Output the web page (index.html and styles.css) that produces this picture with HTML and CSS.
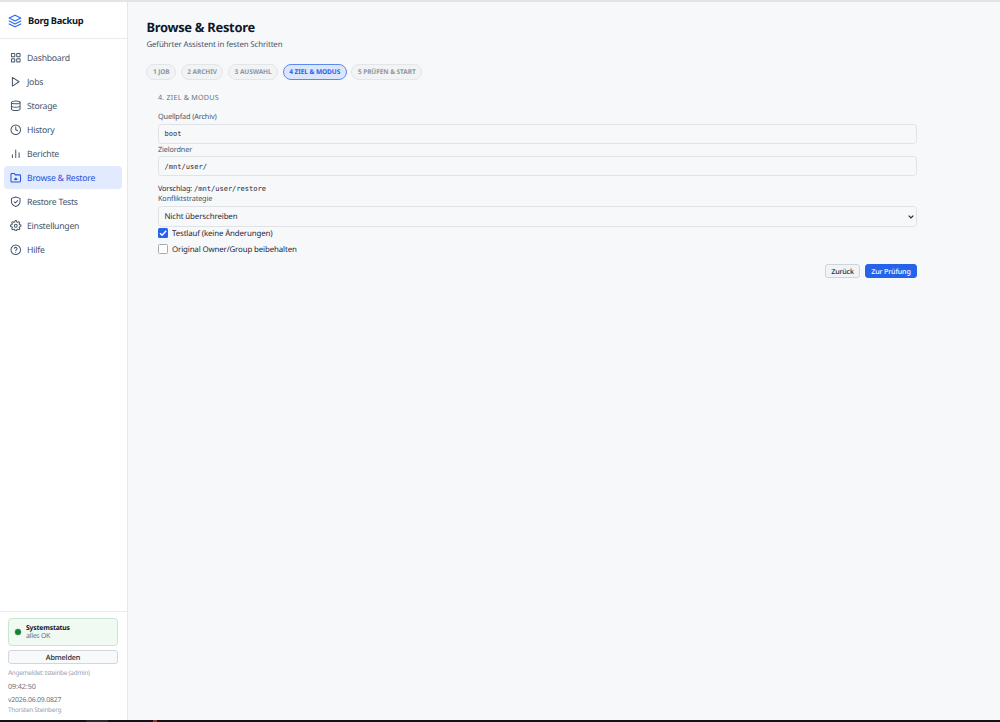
FILE: index.html
```html
<!DOCTYPE html>
<html lang="de">
<head>
<meta charset="utf-8">
<title>Borg Backup</title>
<link rel="stylesheet" href="styles.css">
</head>
<body>
<div class="app">
  <aside class="sidebar">
    <div class="brand">
      <svg class="brand-icon" viewBox="0 0 24 24"><path d="M12 2 2 7l10 5 10-5zM2 12l10 5 10-5M2 17l10 5 10-5"/></svg>
      <span>Borg Backup</span>
    </div>
    <nav class="nav">
      <a class="nav-item"><svg viewBox="0 0 24 24"><rect x="3" y="3" width="7" height="7" rx="1"/><rect x="14" y="3" width="7" height="7" rx="1"/><rect x="3" y="14" width="7" height="7" rx="1"/><rect x="14" y="14" width="7" height="7" rx="1"/></svg><span>Dashboard</span></a>
      <a class="nav-item"><svg viewBox="0 0 24 24"><path d="M5 3l14 9-14 9z"/></svg><span>Jobs</span></a>
      <a class="nav-item"><svg viewBox="0 0 24 24"><ellipse cx="12" cy="5" rx="9" ry="3"/><path d="M3 5v14c0 1.700 4 3 9 3s9-1.300 9-3V5M3 12c0 1.700 4 3 9 3s9-1.300 9-3"/></svg><span>Storage</span></a>
      <a class="nav-item"><svg viewBox="0 0 24 24"><circle cx="12" cy="12" r="10"/><path d="M12 6v6l4 2"/></svg><span>History</span></a>
      <a class="nav-item"><svg viewBox="0 0 24 24"><path d="M5 20v-6M12 20V4M19 20V10"/></svg><span>Berichte</span></a>
      <a class="nav-item active"><svg viewBox="0 0 24 24"><path d="M22 19a2 2 0 0 1-2 2H4a2 2 0 0 1-2-2V5a2 2 0 0 1 2-2h5l2 3h9a2 2 0 0 1 2 2z"/><path d="M12 12.500l-2.500 3h5zM12 13v3"/></svg><span>Browse &amp; Restore</span></a>
      <a class="nav-item"><svg viewBox="0 0 24 24"><path d="M12 22s9-4 9-10V5l-9-3-9 3v7c0 6 9 10 9 10z"/><path d="M8.500 12l2.500 2.500 5-5"/></svg><span>Restore Tests</span></a>
      <a class="nav-item"><svg viewBox="0 0 24 24"><circle cx="12" cy="12" r="3"/><path d="M19.400 15a1.650 1.650 0 0 0 .33 1.820l.06.06a2 2 0 1 1-2.830 2.830l-.06-.06a1.650 1.650 0 0 0-2.800 1.170V21a2 2 0 0 1-4 0v-.09A1.650 1.650 0 0 0 7.200 19.700l-.06.06a2 2 0 1 1-2.830-2.830l.06-.06A1.650 1.650 0 0 0 3.100 14H3a2 2 0 0 1 0-4h.09A1.650 1.650 0 0 0 4.300 7.200l-.06-.06a2 2 0 1 1 2.830-2.830l.06.06A1.650 1.650 0 0 0 10 3.100V3a2 2 0 0 1 4 0v.09a1.650 1.650 0 0 0 2.800 1.210l.06-.06a2 2 0 1 1 2.830 2.830l-.06.06A1.650 1.650 0 0 0 20.900 10H21a2 2 0 0 1 0 4h-.09a1.650 1.650 0 0 0-1.510 1z"/></svg><span>Einstellungen</span></a>
      <a class="nav-item"><svg viewBox="0 0 24 24"><circle cx="12" cy="12" r="10"/><path d="M9.100 9a3 3 0 0 1 5.800 1c0 2-2.900 2.500-2.900 4M12 17.500v.1"/></svg><span>Hilfe</span></a>
    </nav>
    <div class="side-foot">
      <div class="status"><i class="dot"></i><div><b class="status-title">Systemstatus</b><div class="status-text">alles OK</div></div></div>
      <button class="logout">Abmelden</button>
      <div class="user">Angemeldet: tsteinbe (admin)</div>
      <div class="clock">09:42:50</div>
      <div class="version">v2026.06.09.0827</div>
      <div class="author">Thorsten Steinberg</div>
    </div>
  </aside>
  <main class="main">
    <h1 class="title">Browse &amp; Restore</h1>
    <p class="subtitle">Geführter Assistent in festen Schritten</p>
    <div class="steps">
      <span class="step">1 JOB</span>
      <span class="step">2 ARCHIV</span>
      <span class="step">3 AUSWAHL</span>
      <span class="step current">4 ZIEL &amp; MODUS</span>
      <span class="step">5 PRÜFEN &amp; START</span>
    </div>
    <section class="panel">
      <h2 class="panel-title">4. ZIEL &amp; MODUS</h2>
      <label class="label">Quellpfad (Archiv)</label>
      <div class="field">boot</div>
      <label class="label label-next">Zielordner</label>
      <div class="field">/mnt/user/</div>
      <div class="hint">Vorschlag: <code>/mnt/user/restore</code></div>
      <label class="label label-select">Konfliktstrategie</label>
      <div class="field select"><span>Nicht überschreiben</span><svg viewBox="0 0 6 4"><path d="M.7.7 3 3 5.300.7"/></svg></div>
      <div class="check"><i class="box checked"><svg viewBox="0 0 10 10"><path d="M2 5.200 4.100 7.300 8.200 2.700"/></svg></i><span>Testlauf (keine Änderungen)</span></div>
      <div class="check check-next"><i class="box"></i><span>Original Owner/Group beibehalten</span></div>
      <div class="actions"><button class="btn">Zurück</button><button class="btn primary">Zur Prüfung</button></div>
    </section>
  </main>
</div>
<div class="taskbar"><i class="task"></i><i class="alert"></i></div>
</body>
</html>
```
FILE: styles.css
```css
* { box-sizing: border-box; }
body {
  margin: 0; height: 722px; overflow: hidden;
  display: flex; flex-direction: column;
  border-top: 2px solid #e4e4e6;
  background: #f7f8fa; color: #334155;
  font-family: "Noto Sans", sans-serif; font-size: 8px;
  text-rendering: geometricPrecision;
}
h1, h2, p { margin: 0; }
button { font-family: inherit; margin: 0; padding: 0; text-rendering: inherit; }
.app { flex: 1; min-height: 0; display: flex; }
.sidebar {
  width: 128px; flex: none; display: flex; flex-direction: column;
  background: #fff; border-right: 1px solid #e5e8ec;
}
.brand {
  height: 37px; flex: none; display: flex; align-items: center; gap: 6px;
  padding: 1px 0 0 8px; border-bottom: 1px solid #e8eaed;
  color: #0f172a; font-size: 9.300px; font-weight: 700; letter-spacing: -.3px; white-space: nowrap;
}
.brand-icon { width: 14px; height: 14px; fill: none; stroke: #2f6bed; stroke-width: 2; stroke-linejoin: round; stroke-linecap: round; }
.nav { flex: 1; padding: 7px 5px 0 3.500px; display: flex; flex-direction: column; gap: 1px; }
.nav-item {
  height: 23px; display: flex; align-items: center; gap: 5.500px; padding-left: 6.500px;
  border-radius: 4px; color: #475569; font-size: 8.700px; letter-spacing: -.25px; white-space: nowrap;
}
.nav-item svg { width: 11.500px; height: 11.500px; fill: none; stroke: currentColor; stroke-width: 2.100; stroke-linecap: round; stroke-linejoin: round; }
.nav-item.active { background: #e2eafd; color: #2454dd; }
.side-foot { flex: none; height: 109px; padding: 6px 9px 0 8px; border-top: 1px solid #e8eaed; white-space: nowrap; }
.status {
  height: 28px; display: flex; align-items: center; gap: 5px; padding-left: 6px;
  background: #f0f9f2; border: 1px solid #c5e8ce; border-radius: 3.500px; line-height: 8px;
}
.dot { width: 6px; height: 6px; border-radius: 50%; background: #15803d; box-shadow: 0 0 0 1px #d5ecdc; }
.status-title { display: block; color: #0f172a; font-size: 6.800px; letter-spacing: -.17px; }
.status-text { height: 8px; padding-top: 1px; color: #64748b; font-size: 6.900px; letter-spacing: -.25px; }
.logout {
  display: block; width: 100%; height: 14px; margin-top: 4px; padding-top: 1px; line-height: 12px;
  background: #f7f9fa; border: 1px solid #d3d6da; border-radius: 3px; color: #1e293b; font-size: 7.300px; font-weight: 500; letter-spacing: -.15px;
}
.user { margin-top: 4px; line-height: 10px; color: #94a3b8; font-size: 6.500px; letter-spacing: -.3px; }
.user { letter-spacing: -.32px; }
.clock { margin-top: 4px; line-height: 10px; color: #64748b; font-size: 7.200px; letter-spacing: -.1px; }
.version { margin-top: 4px; line-height: 10px; color: #64748b; font-size: 6.900px; letter-spacing: -.2px; }
.author { margin-top: -1px; line-height: 10px; color: #94a3b8; font-size: 6.400px; letter-spacing: -.25px; }
.main { flex: 1; padding: 17px 83px 0 18.400px; }
.title { line-height: 17px; color: #0f172a; font-size: 12.900px; font-weight: 700; letter-spacing: -.28px; }
.subtitle { margin-top: 4px; line-height: 10px; color: #475569; font-size: 7.900px; letter-spacing: -.14px; }
.steps { margin-top: 14px; display: flex; gap: 4.700px; }
.step {
  height: 16px; padding: 0 5.500px; line-height: 14px; border: 1px solid #e3e6e9; border-radius: 8px;
  background: #f1f3f5; color: #8e97a4; font-size: 6.500px; font-weight: 700; letter-spacing: -.06px; white-space: nowrap;
}
.step.current { background: #dbe6fb; border-color: #5b8bf0; color: #2563eb; }
.panel { padding: 12px 0 0 11.600px; }
.panel-title { padding-top: 1px; line-height: 11px; color: #64748b; font-size: 7.200px; font-weight: 400; letter-spacing: .2px; }
.label { display: block; margin-top: 8px; line-height: 10px; color: #475569; font-size: 7.300px; letter-spacing: -.14px; }
.field {
  height: 20px; margin-top: 2px; padding: 0 5.500px; line-height: 18px;
  border: 1px solid #dfe3e7; border-radius: 3.500px; color: #1e293b;
  font-family: "DejaVu Sans Mono", monospace; font-size: 7.050px;
}
.label-next { margin-top: 1px; }
.label-next + .field { margin-top: 1px; height: 20px; line-height: 19px; }
.hint { margin-top: 8px; line-height: 10px; color: #1e293b; font-size: 7.300px; letter-spacing: -.14px; }
.hint code { font-family: "DejaVu Sans Mono", monospace; font-size: 7.050px; letter-spacing: 0; }
.label-select { margin-top: 0; }
.field.select {
  height: 21px; padding-right: 2px; display: flex; align-items: center; justify-content: space-between;
  font-family: "Noto Sans", sans-serif; font-size: 7.900px; letter-spacing: -.12px;
}
.select span { padding-top: 1px; }
.select svg { width: 6px; height: 4px; fill: none; stroke: #1e293b; stroke-width: 1.200; }
.check { margin-top: 1px; height: 10px; display: flex; align-items: center; gap: 4px; color: #1e293b; font-size: 7.900px; letter-spacing: -.14px; }
.check span { padding-top: 1px; }
.check-next { margin-top: 6px; }
.box { width: 10px; height: 10px; border: 1px solid #a5abb4; border-radius: 1.500px; background: #fff; }
.box.checked { border: 0; background: #2563eb; }
.box svg { display: block; width: 10px; height: 10px; fill: none; stroke: #fff; stroke-width: 1.400; }
.actions { margin-top: 10px; display: flex; justify-content: flex-end; gap: 5px; }
.btn { width: 35px; height: 14px; padding-top: 1px; line-height: 12px; border: 1px solid #cfd4d9; border-radius: 3px; background: #f1f4f6; color: #1e293b; font-size: 7.200px; font-weight: 500; letter-spacing: -.2px; }
.btn.primary { width: 52px; background: #2563eb; border-color: #2563eb; color: #fff; }
.taskbar { flex: none; height: 2px; display: flex; background: #14101a; padding-left: 86px; }
.task { width: 22px; background: #2c2931; }
.alert { width: 4px; margin-left: 45px; background: #8f3430; }
```
